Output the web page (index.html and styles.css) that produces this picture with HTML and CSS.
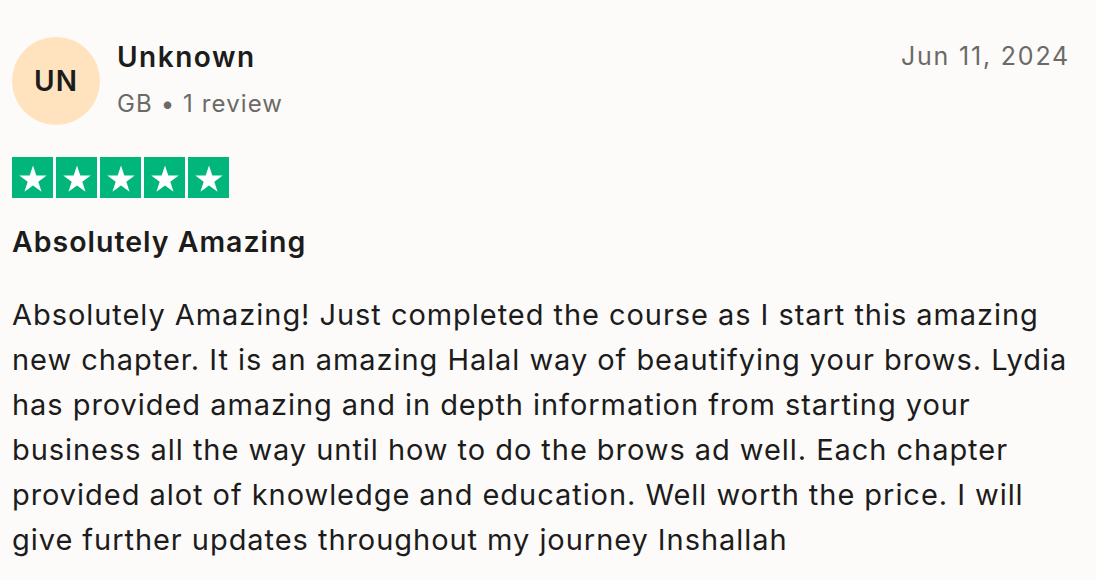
FILE: index.html
```html
<!DOCTYPE html>
<html lang="en">
<head>
<meta charset="utf-8">
<link rel="stylesheet" href="styles.css">
</head>
<body>
<article class="review">
  <header class="head">
    <div class="user">
      <div class="avatar">UN</div>
      <div class="meta">
        <div class="name">Unknown</div>
        <div class="sub">GB • 1 review</div>
      </div>
    </div>
    <time class="date">Jun 11, 2024</time>
  </header>
  <div class="stars">
    <span class="star"><svg viewBox="0 0 24 24"><path d="M12 3.2l2.35 7.05h7.35l-5.95 4.35 2.3 7.1L12 17.3l-6.05 4.4 2.3-7.1L2.3 10.25h7.35z" fill="#fff"/></svg></span>
    <span class="star"><svg viewBox="0 0 24 24"><path d="M12 3.2l2.35 7.05h7.35l-5.95 4.35 2.3 7.1L12 17.3l-6.05 4.4 2.3-7.1L2.3 10.25h7.35z" fill="#fff"/></svg></span>
    <span class="star"><svg viewBox="0 0 24 24"><path d="M12 3.2l2.35 7.05h7.35l-5.95 4.35 2.3 7.1L12 17.3l-6.05 4.4 2.3-7.1L2.3 10.25h7.35z" fill="#fff"/></svg></span>
    <span class="star"><svg viewBox="0 0 24 24"><path d="M12 3.2l2.35 7.05h7.35l-5.95 4.35 2.3 7.1L12 17.3l-6.05 4.4 2.3-7.1L2.3 10.25h7.35z" fill="#fff"/></svg></span>
    <span class="star"><svg viewBox="0 0 24 24"><path d="M12 3.2l2.35 7.05h7.35l-5.95 4.35 2.3 7.1L12 17.3l-6.05 4.4 2.3-7.1L2.3 10.25h7.35z" fill="#fff"/></svg></span>
  </div>
  <h2 class="title">Absolutely Amazing</h2>
  <p class="body">Absolutely Amazing! Just completed the course as I start this amazing new chapter. It is an amazing Halal way of beautifying your brows. Lydia has provided amazing and in depth information from starting your business all the way until how to do the brows ad well. Each chapter provided alot of knowledge and education. Well worth the price. I will give further updates throughout my journey Inshallah</p>
</article>
</body>
</html>
```
FILE: styles.css
```css
html, body {
  margin: 0;
  padding: 0;
  background: #fcfbf9;
}
body {
  font-family: "Inter", "Liberation Sans", sans-serif;
  color: #1c1c1c;
}
.review {
  padding: 37px 26px 0 12px;
  width: 1058px;
  box-sizing: content-box;
}
.head {
  display: flex;
  justify-content: space-between;
  align-items: flex-start;
}
.user {
  display: flex;
  align-items: center;
  gap: 17px;
}
.avatar {
  width: 88px;
  height: 88px;
  border-radius: 50%;
  background: #ffe3bf;
  display: flex;
  align-items: center;
  justify-content: center;
  font-size: 28px;
  font-weight: 600;
  color: #1c1c1c;
  letter-spacing: 1px;
}
.meta {
  display: flex;
  flex-direction: column;
  margin-top: -4px;
}
.name {
  font-size: 28px;
  font-weight: 600;
  line-height: 40px;
  letter-spacing: 1.5px;
}
.sub {
  font-size: 24px;
  color: #6b6a66;
  line-height: 36px;
  margin-top: 9px;
  letter-spacing: 1.1px;
}
.date {
  font-size: 25px;
  color: #6b6a66;
  line-height: 36px;
  margin-top: 1px;
  letter-spacing: 1.8px;
}
.stars {
  display: flex;
  gap: 3px;
  margin-top: 32px;
}
.star {
  width: 41px;
  height: 41px;
  background: #00b67a;
  display: flex;
  align-items: center;
  justify-content: center;
}
.star svg {
  width: 34px;
  height: 34px;
}
.title {
  margin: 24px 0 0 0;
  font-size: 28.5px;
  font-weight: 600;
  line-height: 40px;
  letter-spacing: 1px;
}
.body {
  margin: 30px 0 0 0;
  font-size: 29px;
  line-height: 45px;
  letter-spacing: 0.95px;
}
```
